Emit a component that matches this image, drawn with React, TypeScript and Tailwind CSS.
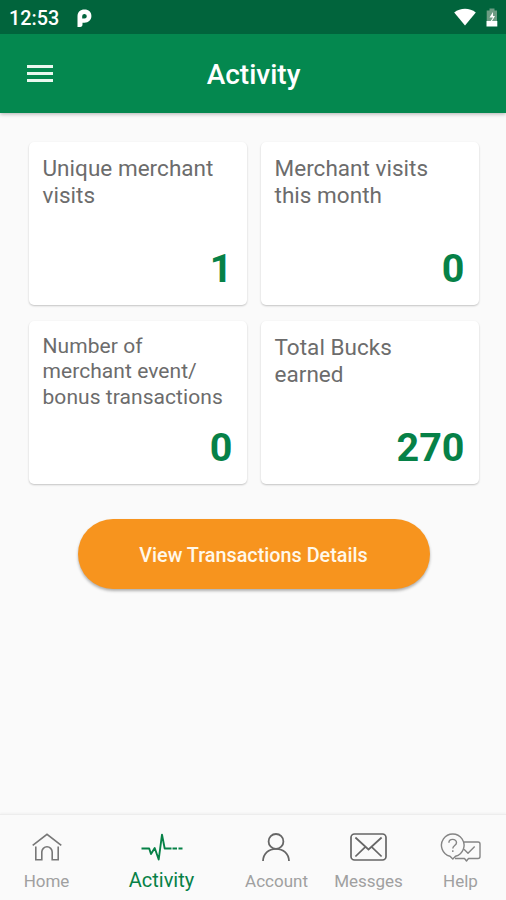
import type { ReactNode } from "react";
import clsx from "clsx";

type Stat = { lines: string[]; value: string; compact?: boolean };

const stats: Stat[] = [
  { lines: ["Unique merchant", "visits"], value: "1" },
  { lines: ["Merchant visits", "this month"], value: "0" },
  { lines: ["Number of", "merchant event/", "bonus transactions"], value: "0", compact: true },
  { lines: ["Total Bucks", "earned"], value: "270" },
];

function StatCard({ stat }: { stat: Stat }) {
  return (
    <section className="flex h-[163px] flex-col justify-between rounded-[5px] bg-white pr-[14px] pb-[13.5px] pl-[14px] shadow-[0_1px_2px_rgba(0,0,0,0.22)]">
      <h2
        className={clsx(
          "pt-[13px] whitespace-nowrap text-[#6c6c6c]",
          stat.compact
            ? "text-[21px] leading-[25.3px] tracking-[0.06px]"
            : "text-[22.5px] leading-[27px] tracking-[0.03px]",
        )}
      >
        {stat.lines.map((line) => (
          <span key={line} className="block">
            {line}
          </span>
        ))}
      </h2>
      <p className="text-right text-[39.5px] leading-[46px] font-bold text-[#068147]">{stat.value}</p>
    </section>
  );
}

function HomeIcon() {
  return (
    <svg width="30" height="28" viewBox="0 0 30 28" fill="none" stroke="#777" strokeWidth="1.6">
      <path d="M.7 12.4 15 1.3l14.3 11.1M3.8 13.5v13.2h6V19a5.2 5.2 0 0 1 10.4 0v7.7h6V13.5" />
    </svg>
  );
}

function ActivityIcon() {
  return (
    <svg width="42" height="28" viewBox="0 0 42 28" fill="none" stroke="#068147" strokeWidth="1.9" strokeLinejoin="round">
      <path d="M.5 15.5h7.700l1.800 5.500 3.700-6 4 11.500L21 1.600l2.700 13.900h6.800M31.500 15.500h4.500M37.500 15.500h4" />
    </svg>
  );
}

function AccountIcon() {
  return (
    <svg className="mr-px" width="28" height="28" viewBox="0 0 28 28" fill="none" stroke="#666" strokeWidth="1.8">
      <circle cx="14" cy="8.4" r="7.4" />
      <path d="M1 28C1.3 20.7 6.6 15.8 14 15.8S26.700 20.700 27 28" />
    </svg>
  );
}

function MailIcon() {
  return (
    <svg width="37" height="28" viewBox="0 0 37 28" fill="none" stroke="#666" strokeWidth="1.7">
      <rect x="1" y="1" width="35" height="26" rx="3.5" />
      <path d="m5.400 4.500 13.100 12 13.100-12M5.400 23.500l10-9.700M31.600 23.500l-10-9.700" />
    </svg>
  );
}

function HelpIcon() {
  return (
    <svg width="41" height="29" viewBox="0 0 41 29" fill="none" stroke="#858585" strokeWidth="1.4" strokeLinejoin="round">
      <path d="M10 23.200A11.300 11.300 0 1 1 15.500 23.200L12.800 26ZM24 9h14q2 0 2 2v12.500q0 2-2 2H28.500L26.500 28l-2-2.500H15" />
      <path d="M8.900 9.800c0-4.500 7.600-4.500 7.600-.1 0 2.900-3.700 2.800-3.700 5.800M12.800 17.300v1.600M24 16.300l4 4 6.700-6.800" />
    </svg>
  );
}

const tabs: { label: string; icon: ReactNode; active?: boolean }[] = [
  { label: "Home", icon: <HomeIcon /> },
  { label: "Activity", icon: <ActivityIcon />, active: true },
  { label: "Account", icon: <AccountIcon /> },
  { label: "Messges", icon: <MailIcon /> },
  { label: "Help", icon: <HelpIcon /> },
];

function StatusBar() {
  return (
    <div className="flex h-[34px] items-center bg-[#01643c] pt-[2px] pr-[8px] pl-[9px] text-white">
      <span className="w-[68px] pt-px text-[19.8px] leading-[23px] font-medium">12:53</span>
      <svg width="15" height="19" viewBox="0 0 15 19">
        <path
          fill="#fff"
          fillRule="evenodd"
          d="M.5 7.500C.5 3 3.300.600 7.500.600c4.300 0 6.900 2.600 6.900 6.500 0 4-2.800 6.600-6.900 6.600H5.500v1.800c0 1.600-.8 2.500-2.400 2.500H.5ZM5.200 7v2.500h2.200A2.300 2.300 0 1 0 5.200 7Z"
        />
      </svg>
      <svg className="mt-[-2px] ml-auto" width="22" height="18" viewBox="0 0 22 18">
        <path fill="#fff" d="M.2 4.500C6.400-.4 15.600-.4 21.800 4.500L11 17.500Z" />
      </svg>
      <svg className="mt-[-2px] ml-[10px]" width="12" height="19" viewBox="0 0 12 19">
        <path fill="#6d9c84" d="M3.500.500h5v2H11V13H.7V2.500h2.800Z" />
        <path fill="#fff" d="M.5 13h4.200L7 9.500H3.500L7 4v4h2l-3 5h5.300v5.500H.5Z" />
      </svg>
    </div>
  );
}

export default function App() {
  return (
    <div className="flex h-[900px] w-[506px] flex-col bg-[#fafafa] font-[Roboto,sans-serif]">
      <header className="shadow-[0_1px_4px_rgba(0,0,0,0.3)]">
        <StatusBar />
        <div className="grid h-[79px] grid-cols-[80px_1fr_80px] items-center bg-[#04884f]">
          <button aria-label="Menu" className="ml-[27px] flex w-[26px] flex-col gap-[4px]">
            <span className="h-[3px] bg-[#eaf8ef]" />
            <span className="h-[3px] bg-[#eaf8ef]" />
            <span className="h-[3px] bg-[#eaf8ef]" />
          </button>
          <h1 className="pt-[3px] pl-px text-center text-[28px] leading-[32px] font-medium text-white">
            Activity
          </h1>
        </div>
      </header>

      <main className="flex flex-1 flex-col items-center pt-[29px] pl-px">
        <div className="grid grid-cols-[218px_218px] gap-x-[14px] gap-y-[16px]">
          {stats.map((stat) => (
            <StatCard key={stat.lines[0]} stat={stat} />
          ))}
        </div>
        <button className="mt-[35px] h-[70px] w-[352px] rounded-full bg-[#f7941e] pt-[3px] text-[19.8px] font-medium text-[#fff8ea] shadow-[0_2px_3px_rgba(0,0,0,0.3)]">
          View Transactions Details
        </button>
      </main>

      <nav className="flex h-[86px] border-t border-[#ededed] bg-[#fafafa] shadow-[0_-1px_2px_rgba(0,0,0,0.04)]">
        {tabs.map((tab) => (
          <a
            key={tab.label}
            className={clsx("flex flex-col items-center pt-[18px] pl-px", tab.active ? "w-[138px]" : "w-[92px]")}
          >
            <span className="flex h-[29px] items-start">{tab.icon}</span>
            <span
              className={clsx(
                "leading-[24px]",
                tab.active ? "mt-[6px] text-[20px] text-[#068147]" : "mt-[7px] text-[17px] text-[#a0a0a0]",
              )}
            >
              {tab.label}
            </span>
          </a>
        ))}
      </nav>
    </div>
  );
}
